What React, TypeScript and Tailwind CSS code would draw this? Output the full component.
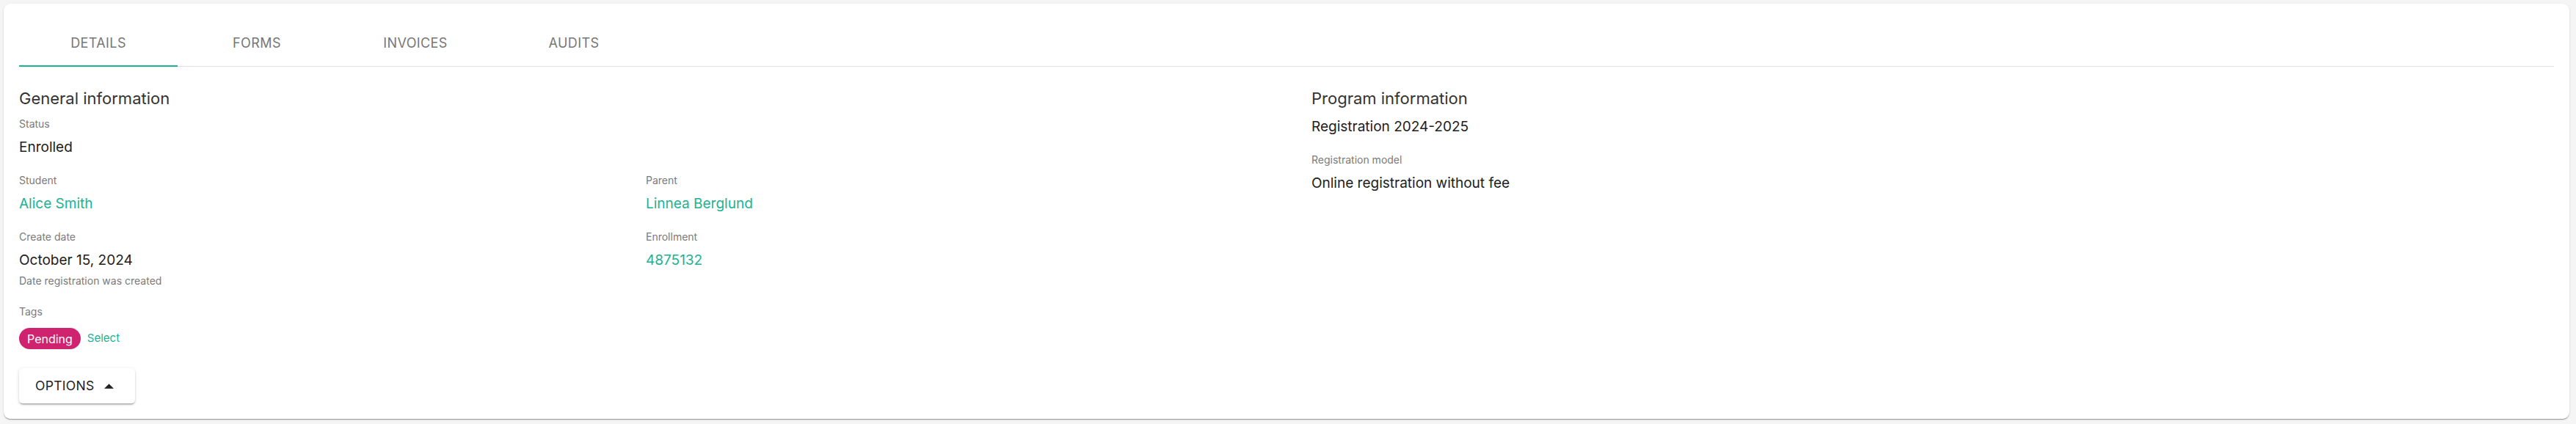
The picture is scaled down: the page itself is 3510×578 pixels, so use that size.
import React from 'react';

{/* Registration details card with tabs. */}

const tabs = ['Details', 'Forms', 'Invoices', 'Audits'];

const Label: React.FC<{ children: React.ReactNode }> = ({ children }) => (
  <div className="text-[14px] leading-[20px] text-[#7a7a7a]">{children}</div>
);

const Value: React.FC<{ children: React.ReactNode; link?: boolean }> = ({ children, link }) => (
  <div className={link ? 'mt-2 text-[19px] leading-[28px] text-[#1bb394]' : 'mt-2 text-[19px] leading-[28px] text-[#212121]'}>
    {children}
  </div>
);

const App: React.FC = () => {
  return (
    <div className="min-h-screen bg-[#f5f5f5] pl-[5px] pr-[9px] pt-[5px] font-['Inter',sans-serif]">
      <div className="rounded-[9px] bg-white px-[21px] pt-[21px] pb-[21px] shadow-[0_2px_1px_-1px_rgba(0,0,0,0.2),0_1px_1px_0_rgba(0,0,0,0.14),0_1px_3px_0_rgba(0,0,0,0.12)]">
        {/* Tabs */}
        <div className="flex h-[65px] border-b border-[#e0e0e0]">
          {tabs.map((tab, i) => (
            <button
              key={tab}
              className="relative flex w-[216px] items-center justify-center text-[18px] uppercase tracking-[0.4px] text-[#777777]"
            >
              {tab}
              {i === 0 && <span className="absolute bottom-[-1px] left-0 right-0 h-[2px] bg-[#1bb394]" />}
            </button>
          ))}
        </div>

        {/* Contenido */}
        <div className="mt-[27px] grid grid-cols-[1761px_1fr]">
          <div>
            <h2 className="text-[22px] leading-[32px] text-[#333333]">General information</h2>

            <div className="mt-[9px]">
              <Label>Status</Label>
              <Value>Enrolled</Value>
            </div>

            <div className="mt-[21px] grid grid-cols-[854px_1fr] gap-y-[21px]">
              <div>
                <Label>Student</Label>
                <Value link>Alice Smith</Value>
              </div>
              <div>
                <Label>Parent</Label>
                <Value link>Linnea Berglund</Value>
              </div>
              <div>
                <Label>Create date</Label>
                <Value>October 15, 2024</Value>
                <div className="mt-[4px] text-[14px] leading-[20px] text-[#7a7a7a]">Date registration was created</div>
              </div>
              <div>
                <Label>Enrollment</Label>
                <Value link>4875132</Value>
              </div>
            </div>

            {/* Tags */}
            <div className="mt-[22px]">
              <Label>Tags</Label>
              <div className="mt-[12px] flex items-center">
                <span className="flex h-[29px] items-center rounded-full bg-[#d0236f] px-[11px] text-[16px] text-white">
                  Pending
                </span>
                <span className="ml-[9px] text-[15px] text-[#1bb394]">Select</span>
              </div>
            </div>

            {/* Botón de opciones */}
            <button className="mt-[26px] flex h-[48px] w-[158px] items-center rounded-[5px] bg-white pl-[22px] text-[17.5px] uppercase tracking-[0.3px] text-[#212121] shadow-[0_3px_1px_-2px_rgba(0,0,0,0.2),0_2px_2px_0_rgba(0,0,0,0.14),0_1px_5px_0_rgba(0,0,0,0.12)]">
              Options
              <svg className="ml-[14px]" width="13" height="7" viewBox="0 0 10 5">
                <path d="M0 5 5 0 10 5z" fill="#212121" />
              </svg>
            </button>
          </div>

          <div>
            <h2 className="text-[22px] leading-[32px] text-[#333333]">Program information</h2>
            <div className="mt-[9px] text-[19px] leading-[28px] text-[#212121]">Registration 2024-2025</div>
            <div className="mt-[21px]">
              <Label>Registration model</Label>
              <Value>Online registration without fee</Value>
            </div>
          </div>
        </div>
      </div>
    </div>
  );
};

export default App;
